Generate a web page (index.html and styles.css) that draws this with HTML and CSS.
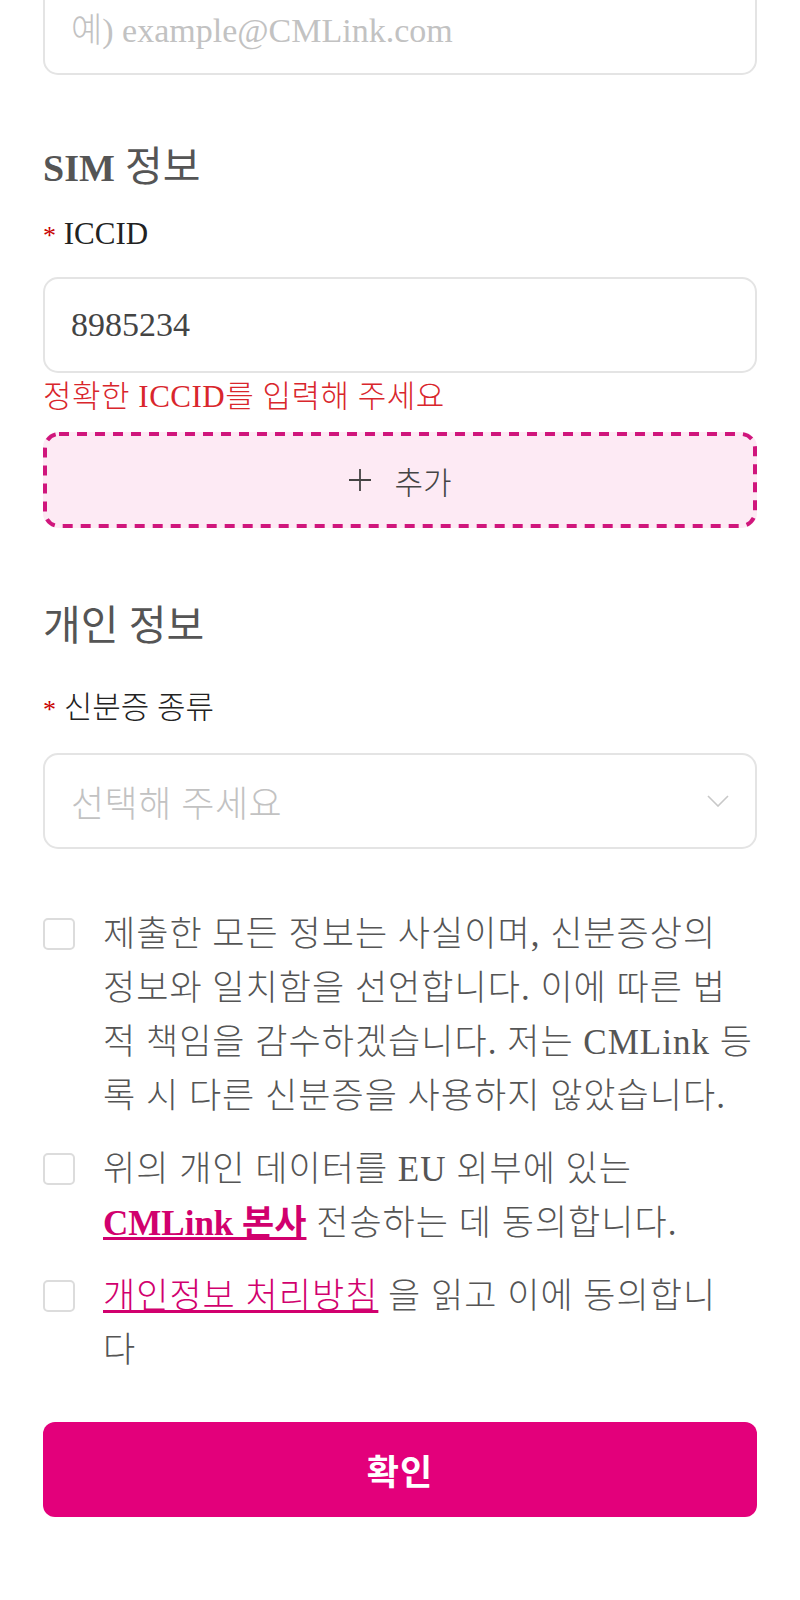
FILE: index.html
```html
<!DOCTYPE html>
<html lang="ko">
<head>
    <meta charset="UTF-8">
    <meta name="viewport" content="width=device-width, initial-scale=1.0">
    <title>CMLink 등록</title>
    <link rel="stylesheet" href="styles.css">
</head>
<body>
    <div class="form">
        <!-- 이메일 -->
        <div class="field-box email-box">
            <span class="placeholder">예) example@CMLink.com</span>
        </div>

        <!-- SIM 정보 -->
        <h2 class="section-title sim-title"><b>SIM</b> 정보</h2>
        <div class="label iccid-label"><span class="req">*</span> ICCID</div>
        <div class="field-box iccid-box">
            <span class="value">8985234</span>
        </div>
        <div class="error-message">정확한 ICCID를 입력해 주세요</div>
        <div class="add-btn">
            <svg class="dash-border"><rect class="dash"></rect></svg>
            <svg width="24" height="24" viewBox="0 0 24 24"><path d="M12 1v22M1 12h22" stroke="#444" stroke-width="1.8" fill="none"/></svg>
            <span>추가</span>
        </div>

        <!-- 개인 정보 -->
        <h2 class="section-title person-title">개인 정보</h2>
        <div class="label id-label"><span class="req">*</span> 신분증 종류</div>
        <div class="field-box select-box">
            <span class="placeholder">선택해 주세요</span>
            <svg width="22" height="12" viewBox="0 0 22 12"><polyline points="1,1 11,11 21,1" stroke="#c8c8c8" stroke-width="1.6" fill="none"/></svg>
        </div>

        <!-- 동의 항목 -->
        <div class="agree-list">
            <div class="agree-item">
                <span class="check"></span>
                <p class="agree-text">제출한 모든 정보는 사실이며, 신분증상의<br>정보와 일치함을 선언합니다. 이에 따른 법<br>적 책임을 감수하겠습니다. 저는 CMLink 등<br>록 시 다른 신분증을 사용하지 않았습니다.</p>
            </div>
            <div class="agree-item">
                <span class="check"></span>
                <p class="agree-text">위의 개인 데이터를 EU 외부에 있는<br><a href="#" class="link-bold">CMLink 본사</a> 전송하는 데 동의합니다.</p>
            </div>
            <div class="agree-item">
                <span class="check"></span>
                <p class="agree-text"><a href="#" class="link">개인정보 처리방침</a> 을 읽고 이에 동의합니<br>다</p>
            </div>
        </div>

        <button class="submit-btn">확인</button>
    </div>
</body>
</html>
```

FILE: styles.css
```css
body {
    margin: 0;
    background-color: #ffffff;
    font-family: "Liberation Serif", "Noto Sans CJK KR", serif;
    font-weight: 300;
}
.form {
    margin-top: -21px;
    padding: 0 43px;
    display: flex;
    flex-direction: column;
}
.field-box {
    height: 96px;
    box-sizing: border-box;
    border: 2px solid #e4e4e4;
    border-radius: 15px;
    padding: 0 26px;
    display: flex;
    align-items: center;
    font-size: 34px;
}
.placeholder {
    color: #c2c2c2;
}
.value {
    color: #444;
}
.section-title {
    margin: 0;
    font-size: 41px;
    line-height: 46px;
    font-weight: normal;
    color: #555;
}
.section-title b {
    font-size: 38px;
    font-weight: bold;
}
.sim-title {
    margin-top: 69px;
}
.person-title {
    margin-top: 75px;
}
.label {
    font-size: 31px;
    line-height: 36px;
    color: #222;
}
.req {
    color: #c80000;
    font-size: 26px;
}
.iccid-label {
    margin-top: 25px;
}
.iccid-box {
    margin-top: 23px;
}
.error-message {
    margin-top: 7px;
    font-size: 31px;
    line-height: 34px;
    color: #d9262c;
    letter-spacing: 0.5px;
}
.add-btn {
    position: relative;
    margin-top: 18px;
    height: 96px;
    border-radius: 15px;
    background-color: #fdeaf4;
    display: flex;
    align-items: center;
    justify-content: center;
    gap: 22px;
    font-size: 31px;
    color: #444;
}
.dash-border {
    position: absolute;
    top: 0;
    left: 0;
    width: 100%;
    height: 100%;
}
.dash {
    x: 2px;
    y: 2px;
    width: calc(100% - 4px);
    height: calc(100% - 4px);
    rx: 14px;
    fill: none;
    stroke: #d0167c;
    stroke-width: 4;
    stroke-dasharray: 10 8;
}
.id-label {
    margin-top: 41px;
}
.select-box {
    margin-top: 25px;
    justify-content: space-between;
    font-size: 36px;
    letter-spacing: 0.5px;
}
.agree-list {
    margin-top: 59px;
    display: flex;
    flex-direction: column;
    gap: 19px;
}
.agree-item {
    display: flex;
    align-items: flex-start;
    gap: 28px;
}
.check {
    flex: none;
    width: 32px;
    height: 32px;
    box-sizing: border-box;
    border: 2px solid #dcdcdc;
    border-radius: 5px;
    margin-top: 10px;
}
.agree-text {
    margin: 0;
    font-size: 35px;
    line-height: 54px;
    color: #555;
    letter-spacing: 1px;
    white-space: nowrap;
}
.link-bold {
    color: #d1006e;
    font-weight: bold;
    letter-spacing: 0;
}
.link {
    color: #d1006e;
}
.submit-btn {
    margin-top: 44px;
    height: 95px;
    border: none;
    border-radius: 12px;
    background-color: #e3007b;
    color: #ffffff;
    font-family: "Liberation Serif", "Noto Sans CJK KR", serif;
    font-size: 35px;
    font-weight: bold;
    letter-spacing: 1px;
}
```
